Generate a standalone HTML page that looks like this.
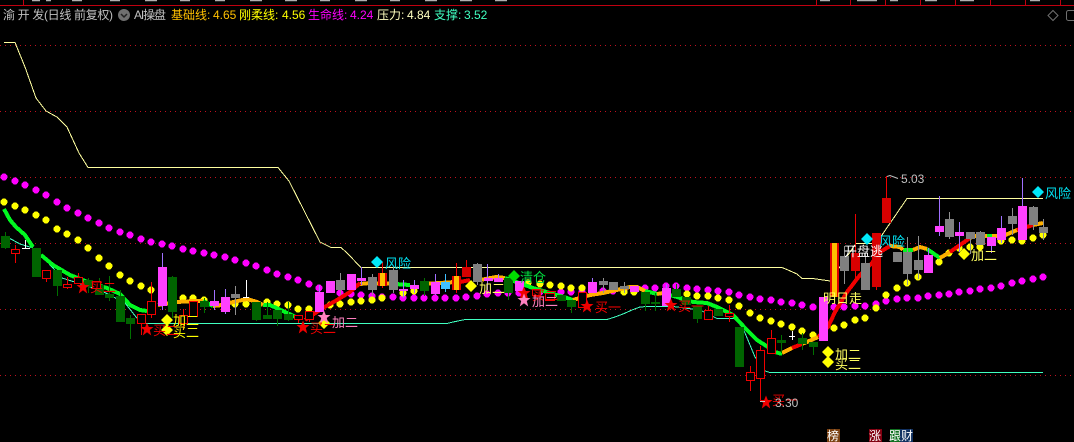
<!DOCTYPE html>
<html><head><meta charset="utf-8"><style>
html,body{margin:0;padding:0;background:#000;width:1074px;height:442px;overflow:hidden}
svg{display:block}
text{font-family:"Liberation Sans","WenQuanYi Zen Hei","Noto Sans CJK SC",sans-serif;font-size:13px}
.c text{font-family:"WenQuanYi Zen Hei","Noto Sans CJK SC",sans-serif;font-size:13px}
.h text{font-family:"Liberation Sans","WenQuanYi Zen Hei","Noto Sans CJK SC",sans-serif;font-size:12px}
</style></head><body>
<svg width="1074" height="442" viewBox="0 0 1074 442" xmlns="http://www.w3.org/2000/svg">
<defs>
<path id="s" d="M0-6.500L1.800-2H6.500L2.800 1 4.200 6.500 0 3.300-4.200 6.500-2.800 1-6.500-2H-1.800z"/>
</defs>
<rect width="1074" height="442" fill="#000"/>
<!-- top bar -->
<path d="M0 5.500H1074" stroke="#c00010" stroke-width="1"/>
<path d="M23.500 0V5M816.500 0V5M850.500 0V5M885.500 0V5M920.500 0V5M955.500 0V5M990.500 0V5M1025.500 0V5M1060.500 0V5" stroke="#c00010"/>
<path d="M32 0.500h8M46 0.500h5M72 0.500h10M110 0.500h10M145 0.500h12M180 0.500h10M215 0.500h10M250 0.500h12M285 0.500h12M320 0.500h10M355 0.500h12M390 0.500h10M425 0.500h12M460 0.500h12M495 0.500h12M820 0.500h10M857 0.500h20M890 0.500h8M925 0.500h12M960 0.500h14M1030 0.500h10" stroke="#b0b0b0" stroke-width="1.500"/>
<!-- header -->
<g class="h">
<text x="3" y="19" fill="#c0c0c0" textLength="110" lengthAdjust="spacing">渝 开 发(日线 前复权)</text>
<circle cx="124" cy="15" r="6" fill="#707070"/>
<path d="M121 14l3 3 3-3" fill="none" stroke="#222" stroke-width="1.500"/>
<text x="134" y="19" fill="#c0c0c0" textLength="32" lengthAdjust="spacing">AI操盘</text>
<text x="171" y="19" fill="#ffc000">基础线:</text><text x="213" y="19" fill="#ffc000">4.65</text>
<text x="239" y="19" fill="#ffff00">刚柔线:</text><text x="282" y="19" fill="#ffff00">4.56</text>
<text x="308" y="19" fill="#ff00ff">生命线:</text><text x="350" y="19" fill="#ff00ff">4.24</text>
<text x="377" y="19" fill="#ffffc0">压力:</text><text x="407" y="19" fill="#ffffc0">4.84</text>
<text x="434" y="19" fill="#40ffc0">支撑:</text><text x="464" y="19" fill="#40ffc0">3.52</text>
</g>
<path d="M1053 10.500l5 5-5 5-5-5z" fill="none" stroke="#707070"/>
<rect x="1066.500" y="10.500" width="12" height="10" rx="2" fill="none" stroke="#707070"/>
<!-- grid -->
<path d="M0 45.500H1074M0 111.500H1074M0 177.500H1074M0 243.500H1074M0 309.500H1074M0 375.500H1074" stroke="#c01020" stroke-dasharray="1 4" shape-rendering="crispEdges"/>
<!-- thin lines -->
<g shape-rendering="crispEdges">
<path d="M4 42.500H15L25 67 36 98 46 111 57 117 67 127 79 153 88 167.500H278L289 181 320 242 331 247.500H341L347 253 361 267.500H782L788 270 797 274 802 278.500H813L830 281 856 243.500H872L882 235 907 198.500H1043" fill="none" stroke="#ffffa0" stroke-width="1"/>
<path d="M9 238L20 244 33 248M41 255L62 278 100 290 125 303 140 322 145 323.500H447L453 322 458 321 465 319.500H607L615 317 623 314 632 310 640 307 647 306.500H673L700 310 717 318.500H738L745 333 755 357 765 371 770 372.500H1043" fill="none" stroke="#40ffc0" stroke-width="1"/>
<!-- dots -->
<g fill="none" stroke-width="7" stroke-linecap="round">
<path stroke="#ff00ff" d="M4 177h0M15 181h0M25 185h0M36 190h0M46 195h0M57 202h0M67 208h0M78 213h0M88 218h0M99 223h0M109 228h0M120 232h0M130 235h0M141 239h0M151 242h0M162 244h0M172 246h0M183 249h0M193 251h0M204 253h0M214 255h0M225 257h0M235 260h0M246 263h0M256 266h0M267 270h0M277 274h0M288 277h0M298 280h0M309 284h0M319 288h0M340 293h0M351 294h0M361 295h0M372 296h0M382 297h0M393 297h0M403 298h0M414 298h0M424 298h0M435 298h0M445 298h0M456 298h0M466 297h0M477 296h0M487 294h0M498 293h0M508 293h0M519 293h0M540 292h0M561 292h0M571 292h0M582 292h0M603 291h0M613 291h0M624 291h0M634 290h0M645 288h0M655 288h0M666 286h0M676 286h0M687 288h0M697 289h0M708 290h0M718 291h0M729 292h0M739 295h0M750 297h0M760 299h0M771 300h0M781 302h0M792 303h0M802 305h0M813 307h0M834 307h0M844 307h0M855 306h0M865 306h0M876 304h0M886 301h0M897 299h0M907 298h0M918 298h0M928 296h0M939 295h0M949 294h0M959 292h0M970 291h0M980 289h0M991 288h0M1001 286h0M1012 283h0M1022 281h0M1033 279h0M1043 277h0"/>
<path stroke="#ffff00" d="M4 202h0M15 206h0M25 210h0M36 215h0M46 220h0M57 229h0M67 234h0M78 240h0M88 248h0M99 258h0M109 266h0M120 275h0M130 281h0M141 286h0M151 290h0M183 298h0M193 298h0M204 300h0M235 304h0M246 304h0M267 302h0M277 304h0M288 305h0M298 309h0M309 309h0M330 305h0M340 304h0M351 302h0M361 301h0M372 300h0M382 298h0M403 293h0M414 291h0M528 283h0M540 284h0M550 285h0M561 286h0M571 288h0M582 288h0M624 292h0M634 292h0M687 294h0M697 296h0M708 296h0M718 298h0M729 300h0M739 306h0M750 313h0M760 318h0M771 321h0M781 324h0M792 327h0M802 331h0M813 335h0M834 328h0M844 325h0M855 320h0M865 318h0M876 308h0M886 295h0M897 288h0M907 283h0M918 277h0M939 262h0M949 253h0M959 248h0M970 247h0M980 247h0M1001 241h0M1012 240h0M1022 241h0M1033 238h0M1043 235h0"/>
</g>
<!-- thick MA -->
<g fill="none" stroke-width="4" stroke-linejoin="round">
<path stroke="#00f820" d="M4 209L10 220 16 227 25 235 33 247M41 255L53 265 70 275 90 283 107 288 120 294 130 305 140 310 147 311M203 301L213 306M263 305L270 305 285 312 300 319M395 284L410 285M505 278L533 288 550 293 567 298 573 300M645 291L657 294M663 293L677 297 693 302 707 303 717 307 733 315 745 328 757 340 768 347 775 352 782 354M903 250L913 250M927 249L940 258M987 236L992 236"/>
<path stroke="#ffb000" d="M158 305L177 302 193 301 203 301M213 306L222 305 233 302 247 299 257 302 263 305M360 284L370 283 395 284M425 284L455 282M480 280L496 277 505 278M573 300L590 295 603 293 630 287 637 287 645 291M657 294L663 293M782 353L792 348M802 344L807 342 818 337M890 246L900 247 903 250M913 250L920 247 927 249M940 258L950 252M970 238L975 236 987 236M992 236L1003 236 1017 230M1033 225L1043 223"/>
<path stroke="#f00000" d="M305 320L323 308 337 300 350 292 360 283M460 282L470 280M792 348L802 344M818 337L828 327 835 312 847 292 860 275 872 263 880 252 890 246M950 252L970 238M1017 230L1033 225"/>
</g>
<!-- candles -->
<path fill="none" stroke="#007000" d="M5.500 232V249M57.500 286V296M88.500 278V293M99.500 278V285M109.500 276V301M120.500 290V296M130.500 315V339M172.500 276V318M204.500 298V313M256.500 320V321M267.500 302V319M277.500 319V326M288.500 302V321M424.500 278V296M508.500 293V300M571.500 307V313M645.500 304V311M655.500 293V311M676.500 284V297M697.500 319V323M781.500 335V353M802.500 333V350M813.500 347V355"/>
<path fill="#006400" d="M1 236h9v12h-9zM32 248h9v29h-9zM53 270h9v16h-9zM84 280h9v7h-9zM95 285h9v10h-9zM105 294h9v4h-9zM116 296h9v26h-9zM126 318h9v6h-9zM168 277h9v35h-9zM200 301h9v6h-9zM252 302h9v18h-9zM263 315h9v4h-9zM273 310h9v9h-9zM284 314h9v6h-9zM420 281h9v10h-9zM504 278h9v15h-9zM557 295h9v6h-9zM567 300h9v7h-9zM641 292h9v12h-9zM651 302h9v2h-9zM672 289h9v8h-9zM682 297h9v8h-9zM693 306h9v13h-9zM714 309h9v7h-9zM735 327h9v40h-9zM777 340h9v3h-9zM798 338h9v6h-9zM809 342h9v5h-9z"/>
<path fill="none" stroke="#a070ff" d="M162.500 253V310M214.500 290V310M225.500 289V314M361.500 267V285M403.500 280V298M414.500 280V293M435.500 274V295M487.500 264V290M592.500 278V282M928.500 248V255M939.500 196V236M959.500 222V252M991.500 246V253M1001.500 216V243M1022.500 178V206M666.500 284V288M319.500 285V292M498.500 274V282"/>
<path fill="#ff40ff" d="M158 267h9v39h-9zM210 301h9v5h-9zM221 297h9v15h-9zM315 292h9v20h-9zM326 281h9v12h-9zM347 274h9v16h-9zM357 278h9v3h-9zM399 289h9v2h-9zM410 285h9v4h-9zM431 282h9v12h-9zM484 278h9v3h-9zM494 278h9v4h-9zM515 281h9v10h-9zM588 282h9v11h-9zM630 286h9v6h-9zM662 288h9v18h-9zM819 297h9v44h-9zM924 255h9v18h-9zM935 226h9v6h-9zM955 232h9v4h-9zM987 237h9v9h-9zM997 228h9v12h-9zM1018 206h9v34h-9z"/>
<path fill="none" stroke="#909090" d="M235.500 286V315M340.500 273V295M372.500 274V295M393.500 267V293M477.500 263V285M603.500 278V293M624.500 282V293M844.500 246V284M865.500 253V263M907.500 237V285M918.500 236V279M949.500 212V239M970.500 239V254M980.500 231V232M1012.500 208V235M1033.500 206V230M1043.500 219V240"/>
<path fill="#808080" d="M231 294h9v4h-9zM336 280h9v10h-9zM368 277h9v13h-9zM389 270h9v20h-9zM473 264h9v18h-9zM599 281h9v4h-9zM609 282h9v8h-9zM620 286h9v3h-9zM840 256h9v15h-9zM861 263h9v27h-9zM893 252h9v10h-9zM903 252h9v22h-9zM914 260h9v10h-9zM945 219h9v18h-9zM966 232h9v7h-9zM976 232h9v13h-9zM1008 216h9v8h-9zM1029 207h9v18h-9zM1039 227h9v6h-9z"/>
<path fill="none" stroke="#f00000" d="M15.500 245V263M46.500 278V282M67.500 277V289M78.500 273V277M141.500 323V335M151.500 282V318M183.500 309V330M298.500 319V323M309.500 319V322M708.500 306V310M729.500 305V322M750.500 366V391M760.500 346V400M771.500 330V338M382.500 262V288M456.500 263V293M466.500 260V267M855.500 214V280M876.500 287V290M886.500 176V198"/>
<path fill="#000" stroke="#f00000" d="M11.500 249.500h8v4h-8zM42.500 270.500h8v8h-8zM63.500 284.500h8v3h-8zM74.500 277.500h8v6h-8zM92.500 281.500h8v7h-8zM137.500 314.500h8v9h-8zM147.500 301.500h8v13h-8zM179.500 315.500h8v8h-8zM189.500 301.500h8v15h-8zM294.500 315.500h8v4h-8zM305.500 311.500h8v8h-8zM532.500 289.500h8v6h-8zM545.500 293.500h9v7h-9zM578.500 292.500h8v15h-8zM704.500 310.500h8v9h-8zM725.500 313.500h8v3h-8zM746.500 372.500h8v8h-8zM756.500 350.500h8v28h-8zM767.500 338.500h8v15h-8z"/>
<path fill="#d80000" d="M462 267h9v10h-9zM851 253h9v18h-9zM872 233h9v54h-9zM882 198h9v25h-9z"/>
<path fill="#e00000" d="M378 273h9v13h-9zM452 276h9v14h-9zM830 243h9v54h-9z"/>
<path fill="#ffc000" d="M380 273h5v13h-5zM454 276h5v14h-5zM832 243h5v54h-5z"/>
<path fill="none" stroke="#40c0ff" d="M445.500 274V292"/>
<path fill="#40c0ff" d="M441 282h9v7h-9z"/>
<path fill="none" stroke="#fff" d="M246.500 280V298M243 297.500h6M792.500 331V340M789 336.500h6M25.500 240V248M22 248.500h8"/>
</g>
<!-- markers -->
<path fill="#ffff00" d="M167 314l6 6-6 6-6-6zM167 324l6 6-6 6-6-6zM324 317l6 6-6 6-6-6zM471 280l6 6-6 6-6-6zM964 248l6 6-6 6-6-6zM828 346l6 6-6 6-6-6zM828 356l6 6-6 6-6-6z"/>
<path fill="#00e8f8" d="M377 256l6 6-6 6-6-6zM867 233l6 6-6 6-6-6zM1038 186l6 6-6 6-6-6z"/>
<path fill="#00e000" d="M514 270l6 6-6 6-6-6z"/>
<g fill="#f00000">
<use href="#s" x="147" y="329"/><use href="#s" x="83" y="287"/><use href="#s" x="303" y="327"/><use href="#s" x="524" y="293"/><use href="#s" x="587" y="306"/><use href="#s" x="671" y="305"/><use href="#s" x="766" y="402"/>
</g>
<g fill="#ff80c0"><use href="#s" x="324" y="317"/><use href="#s" x="524" y="300"/></g>
<!-- labels -->
<g class="c">
<text x="153" y="335" fill="#f00000">买二</text>
<text x="173" y="325" fill="#ffff00">加二</text>
<text x="173" y="337" fill="#ffff00">买二</text>
<text x="90" y="292" fill="#f00000">买二</text>
<text x="310" y="333" fill="#f00000">买二</text>
<text x="332" y="327" fill="#ff80c0">加二</text>
<text x="385" y="268" fill="#00e0f0">风险</text>
<text x="479" y="293" fill="#ffff60">加二</text>
<text x="520" y="282" fill="#00e040">清仓</text>
<text x="532" y="300" fill="#f00000">买二</text>
<text x="532" y="306" fill="#ff80c0">加二</text>
<text x="595" y="312" fill="#f00000">买一</text>
<text x="678" y="311" fill="#f00000">买一</text>
<text x="772" y="405" fill="#f00000">买一</text>
<text x="823" y="303" fill="#ffff60">明日走</text>
<text x="844" y="256" fill="#ffffff">开盘逃</text>
<text x="879" y="246" fill="#00e0f0">风险</text>
<text x="1045" y="198" fill="#00e0f0">风险</text>
<text x="971" y="260" fill="#ffff60">加二</text>
<text x="835" y="359" fill="#ffff60">加二</text>
<text x="835" y="369" fill="#ffff60">买二</text>
</g>
<path d="M760 401.500h5M887 176.500l3-1 8 3" stroke="#c0c0c0" fill="none"/>
<text x="775" y="407" fill="#c0c0c0" style="font-size:12px">3.30</text>
<text x="901" y="183" fill="#c0c0c0" style="font-size:12px">5.03</text>
<!-- bottom tags -->
<rect x="827" y="429" width="13" height="13" fill="#7a4010"/>
<rect x="869" y="429" width="13" height="13" fill="#800010"/>
<rect x="890" y="429" width="10" height="13" fill="#107020"/>
<rect x="900" y="429" width="13" height="13" fill="#103060"/>
<g class="c" fill="#fff">
<text x="827" y="440" style="font-size:12px">榜</text>
<text x="869" y="440" style="font-size:12px">涨</text>
<text x="889" y="440" style="font-size:12px">跟</text>
<text x="901" y="440" style="font-size:12px">财</text>
</g>
</svg>
</body></html>
